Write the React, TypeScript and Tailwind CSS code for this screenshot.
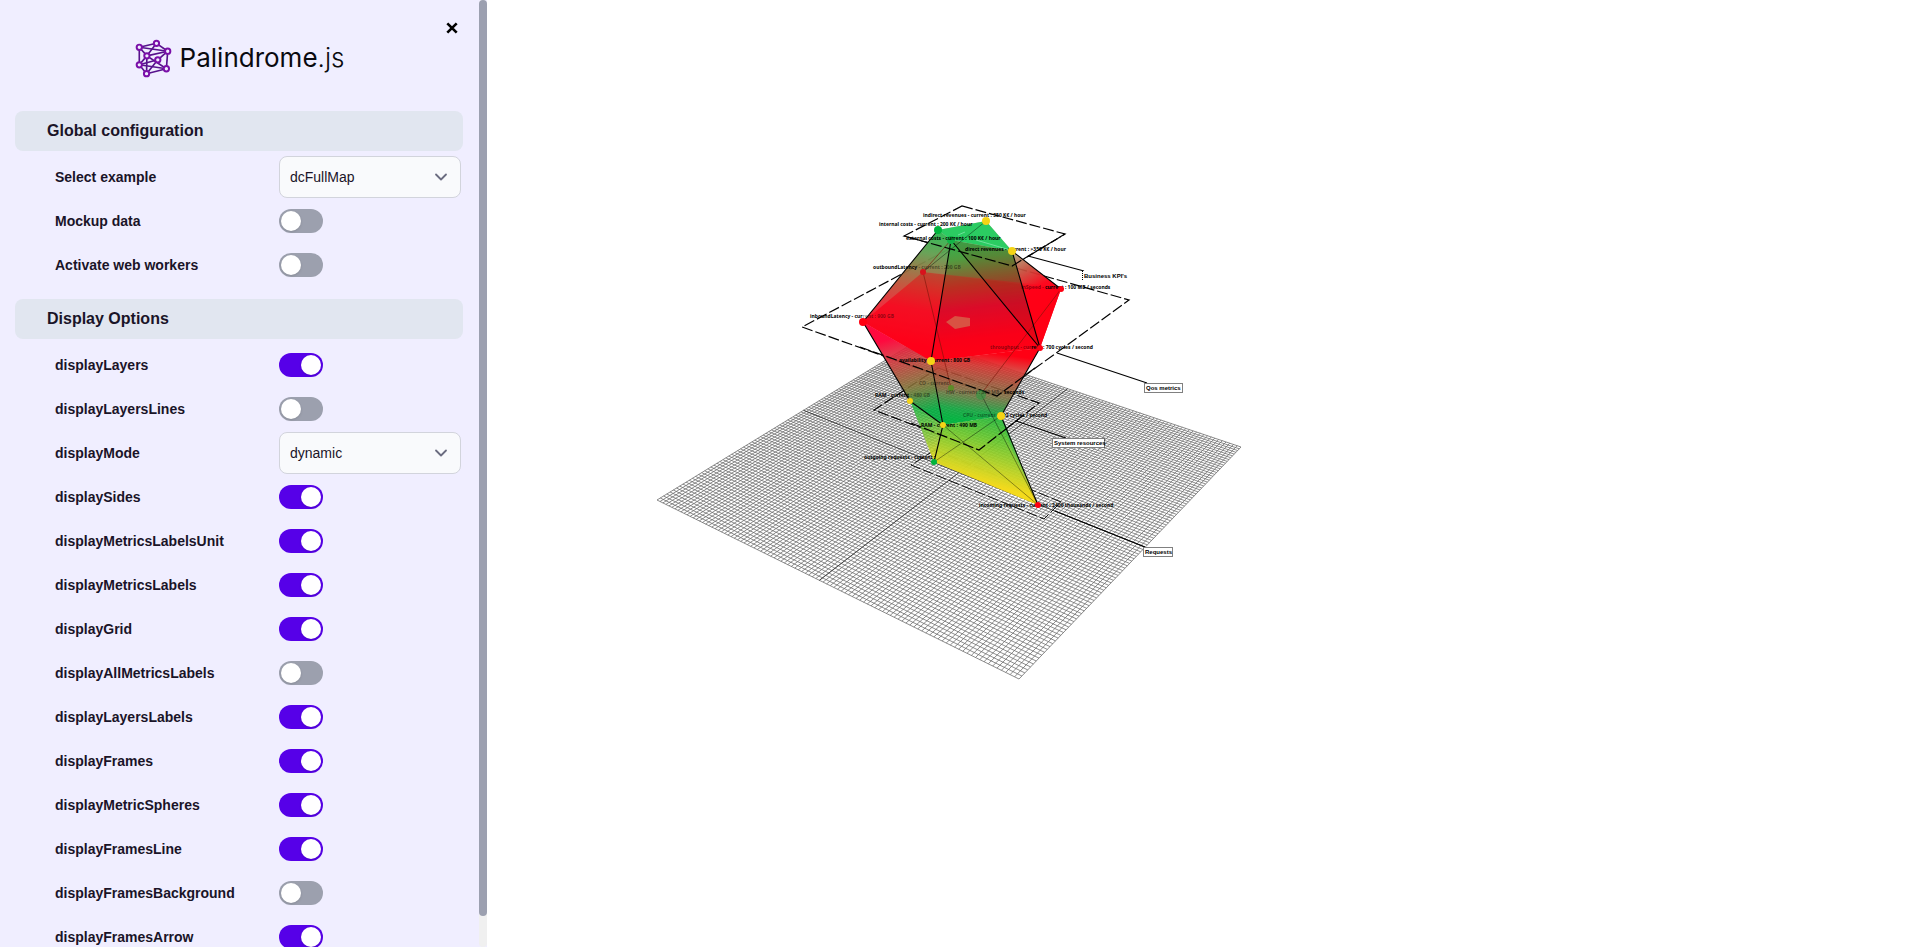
import React, { useState } from "react";
import { ChevronDown } from "lucide-react";

type Point = [number, number];

type Option =
  | { kind: "toggle"; label: string; on: boolean }
  | { kind: "select"; label: string; value: string; choices: string[] };

const toggle = (label: string, on: boolean): Option => ({ kind: "toggle", label, on });

const sections: { title: string; options: Option[] }[] = [
  {
    title: "Global configuration",
    options: [
      { kind: "select", label: "Select example", value: "dcFullMap", choices: ["dcFullMap"] },
      toggle("Mockup data", false),
      toggle("Activate web workers", false),
    ],
  },
  {
    title: "Display Options",
    options: [
      toggle("displayLayers", true),
      toggle("displayLayersLines", false),
      { kind: "select", label: "displayMode", value: "dynamic", choices: ["dynamic", "static"] },
      toggle("displaySides", true),
      toggle("displayMetricsLabelsUnit", true),
      toggle("displayMetricsLabels", true),
      toggle("displayGrid", true),
      toggle("displayAllMetricsLabels", false),
      toggle("displayLayersLabels", true),
      toggle("displayFrames", true),
      toggle("displayMetricSpheres", true),
      toggle("displayFramesLine", true),
      toggle("displayFramesBackground", false),
      toggle("displayFramesArrow", true),
    ],
  },
];

function OptionRow({ option }: { option: Option }) {
  const id = option.label.replace(/\s+/g, "-");
  const [on, setOn] = useState(option.kind === "toggle" && option.on);
  return (
    <div className="flex h-11 items-center pl-10">
      <label htmlFor={id} className="w-56 shrink-0 text-sm font-bold text-[#1a1428]">
        {option.label}
      </label>
      {option.kind === "toggle" ? (
        <input
          id={id}
          type="checkbox"
          checked={on}
          onChange={(e) => setOn(e.target.checked)}
          className="flex h-6 w-11 shrink-0 cursor-pointer appearance-none items-center rounded-full bg-[#9ca0ae] px-0.5 before:block before:size-5 before:rounded-full before:bg-white before:shadow-sm before:content-[''] checked:bg-[#5600e8] checked:before:translate-x-5"
        />
      ) : (
        <div className="grid w-[182px] items-center">
          <select
            id={id}
            defaultValue={option.value}
            className="col-start-1 row-start-1 h-[42px] w-full appearance-none rounded-lg border border-[#d2d4dc] bg-[#f9fafc] px-2.5 text-sm text-[#1a1428]"
          >
            {option.choices.map((c) => (
              <option key={c}>{c}</option>
            ))}
          </select>
          <ChevronDown
            size={20}
            strokeWidth={2.2}
            className="pointer-events-none col-start-1 row-start-1 mr-2.5 justify-self-end text-[#6b6c80]"
          />
        </div>
      )}
    </div>
  );
}

const logoNodes: Point[] = [
  [56, 66], [108, 54], [142, 78], [79, 92], [112, 104], [56, 119], [138, 131], [78, 146],
];
const logoEdges: Point[] = [
  [0, 1], [1, 2], [0, 5], [0, 3], [0, 2], [1, 3], [3, 2], [2, 6], [2, 4], [3, 5],
  [3, 7], [4, 5], [4, 7], [5, 6], [5, 7], [6, 7], [3, 6],
];

function Logo() {
  return (
    <div className="flex items-center justify-center gap-2">
      <svg viewBox="43 42 112 116" width="37" height="39" aria-hidden="true">
        <g stroke="#57128c" strokeWidth="5">
          {logoEdges.map(([a, b]) => (
            <line key={`${a}-${b}`} x1={logoNodes[a][0]} y1={logoNodes[a][1]} x2={logoNodes[b][0]} y2={logoNodes[b][1]} />
          ))}
        </g>
        {logoNodes.map(([x, y]) => (
          <circle key={`${x}-${y}`} cx={x} cy={y} r="8" fill="#f0eeff" stroke="#7a0fa8" strokeWidth="6" />
        ))}
      </svg>
      <span className="font-[Inter,sans-serif] text-[26px] leading-10 text-[#0a0a0f]">
        Palindrome<span className="font-light">.js</span>
      </span>
    </div>
  );
}

function Sidebar() {
  return (
    <aside className="flex h-full w-[487px] shrink-0 bg-[#f0eeff]">
      <div className="min-w-0 flex-1 overflow-y-auto px-[15px] [scrollbar-width:none]">
        <div className="flex h-[38px] items-end justify-end">
          <button type="button" aria-label="Close" className="flex h-5 w-6 items-center justify-center">
            <svg viewBox="0 0 12 12" width="12" height="12" stroke="#000" strokeWidth="2.6">
              <path d="M1.3 1.3 10.7 10.7M10.7 1.3 1.3 10.7" />
            </svg>
          </button>
        </div>
        <div className="h-[73px]">
          <Logo />
        </div>
        {sections.map((s) => (
          <section key={s.title} className="mb-3 pr-px">
            <h2 className="mb-1 flex h-10 items-center rounded-lg bg-[#e1e6f0] px-8 text-base font-bold text-[#1a1428]">
              {s.title}
            </h2>
            {s.options.map((o) => (
              <OptionRow key={o.label} option={o} />
            ))}
          </section>
        ))}
      </div>
      <div className="h-full w-2 rounded bg-[#f0f0f0]" aria-hidden="true">
        <div className="h-[96.7%] rounded bg-[#9ca0b0]" />
      </div>
    </aside>
  );
}

/* Ground grid, projected from a unit square onto four screen corners. */
const corners: Point[] = [[657, 500], [1019, 679], [1241, 447], [920, 339]];
const DIVISIONS = 100;

function project(u: number, v: number): Point {
  const [[x0, y0], [x1, y1], [x2, y2], [x3, y3]] = corners;
  const dx1 = x1 - x2, dx2 = x3 - x2, sx = x0 - x1 + x2 - x3;
  const dy1 = y1 - y2, dy2 = y3 - y2, sy = y0 - y1 + y2 - y3;
  const det = dx1 * dy2 - dx2 * dy1;
  const g = (sx * dy2 - dx2 * sy) / det;
  const h = (dx1 * sy - sx * dy1) / det;
  const w = g * u + h * v + 1;
  return [
    ((x1 - x0 + g * x1) * u + (x3 - x0 + h * x3) * v + x0) / w,
    ((y1 - y0 + g * y1) * u + (y3 - y0 + h * y3) * v + y0) / w,
  ];
}

const segment = (a: Point, b: Point) =>
  `M${a[0].toFixed(1)} ${a[1].toFixed(1)}L${b[0].toFixed(1)} ${b[1].toFixed(1)}`;

const gridPath = Array.from({ length: DIVISIONS + 1 }, (_, i) => i / DIVISIONS)
  .map((t) => segment(project(t, 0), project(t, 1)) + segment(project(0, t), project(1, t)))
  .join("");
const axisPath = segment(project(0.5, 0), project(0.5, 1)) + segment(project(0, 0.5), project(1, 0.5));

const frames = [
  "962,206 1065,234 1012,266 904,236",
  "949,249 1129,300 997,396 802,327",
  "938,368 1039,403 979,450 874,410",
];

const spheres: [number, number, string, number][] = [
  [986, 221, "#f5d416", 4], [1012, 251, "#f5d416", 4], [938, 230, "#00b33c", 4],
  [863, 322, "#ff0012", 4], [931, 361, "#f5d416", 4], [1040, 348, "#ff0012", 3],
  [1061, 289, "#ff0012", 3], [910, 401, "#f5d416", 3], [943, 425, "#f5d416", 3],
  [1001, 416, "#f5d416", 4], [934, 462, "#00b33c", 3], [1038, 505, "#ff0012", 3],
];

type LabelPart = { text: string; opacity: number };
const solid = (text: string): LabelPart => ({ text, opacity: 1 });
const faded = (text: string): LabelPart => ({ text, opacity: 0.45 });

const metricLabels: { x: number; y: number; parts: LabelPart[] }[] = [
  { x: 923, y: 217, parts: [solid("indirect revenues - current : 350 K€ / hour")] },
  { x: 879, y: 226, parts: [solid("internal costs - current : 200 K€ / hour")] },
  { x: 906, y: 240, parts: [solid("external costs - current : 100 K€ / hour")] },
  { x: 965, y: 251, parts: [solid("direct revenues - current : >350 K€ / hour")] },
  { x: 873, y: 269, parts: [solid("outboundLatency"), faded(" - current : 200 GB")] },
  { x: 1021, y: 289, parts: [faded("inSpeed - "), solid("current : 100 MB / seconds")] },
  { x: 810, y: 318, parts: [solid("inboundLatency - cur"), faded("rent : 900 GB")] },
  { x: 990, y: 349, parts: [faded("throughput - cur"), solid("rent : 700 cycles / second")] },
  { x: 899, y: 362, parts: [solid("availability - current : 800 GB")] },
  { x: 919, y: 385, parts: [faded("CO - current")] },
  { x: 946, y: 394, parts: [faded("HW - current : 390 MB / "), solid("seconds")] },
  { x: 875, y: 397, parts: [solid("RAM - current"), faded(" : 480 GB")] },
  { x: 963, y: 417, parts: [faded("CPU - current"), solid(" : 392 cycles / second")] },
  { x: 921, y: 427, parts: [solid("RAM - current : 490 MB")] },
  { x: 864, y: 459, parts: [solid("outgoing requests - current :")] },
  { x: 979, y: 507, parts: [solid("incoming requests - current : 2400 thousands / second")] },
];

const layerLabels: { x: number; y: number; w: number; text: string; from: Point; to: Point; open?: boolean }[] = [
  { x: 1082, y: 271, w: 46, text: "Business KPI's", from: [1028, 256], to: [1084, 271], open: true },
  { x: 1144, y: 383, w: 38, text: "Qos metrics", from: [1057, 353], to: [1147, 383] },
  { x: 1052, y: 438, w: 52, text: "System resources", from: [1016, 421], to: [1066, 438] },
  { x: 1143, y: 547, w: 29, text: "Requests", from: [1055, 511], to: [1145, 547] },
];

function Gradient({ id, from, to, stops }: { id: string; from: Point; to: Point; stops: [number, string, number][] }) {
  return (
    <linearGradient id={id} gradientUnits="userSpaceOnUse" x1={from[0]} y1={from[1]} x2={to[0]} y2={to[1]}>
      {stops.map(([o, c, a]) => (
        <stop key={o} offset={o} stopColor={c} stopOpacity={a} />
      ))}
    </linearGradient>
  );
}

function Scene() {
  return (
    <svg viewBox="487 0 1432 947" className="h-full w-full" role="img" aria-label="3D metrics map">
      <defs>
        <Gradient id="upperLeft" from={[938, 232]} to={[918, 345]} stops={[[0, "#22bd50", 0.9], [0.2, "#5fa050", 0.9], [0.5, "#c04a30", 0.85], [0.7, "#f01428", 0.8], [1, "#ff0018", 0.95]]} />
        <Gradient id="upperMid" from={[980, 232]} to={[994, 355]} stops={[[0, "#1fbb50", 0.95], [0.2, "#4a9a3a", 0.95], [0.42, "#9a4625", 0.95], [0.6, "#cc1030", 0.97], [0.85, "#f80018", 1], [1, "#ff0014", 1]]} />
        <Gradient id="upperRight" from={[1012, 250]} to={[1043, 310]} stops={[[0, "#a8b888", 0.75], [0.35, "#c84838", 0.85], [0.65, "#ff0018", 0.95], [1, "#ff0014", 1]]} />
        <Gradient id="lowerLeft" from={[905, 335]} to={[925, 412]} stops={[[0, "#ff0038", 0.95], [0.3, "#d03a3c", 0.8], [0.65, "#7c7a38", 0.8], [1, "#00ad3e", 0.9]]} />
        <Gradient id="lowerMid" from={[985, 352]} to={[975, 422]} stops={[[0, "#ff0014", 1], [0.2, "#d83530", 0.9], [0.6, "#7c7040", 0.85], [0.85, "#12a840", 0.9], [1, "#00b43e", 0.95]]} />
        <Gradient id="baseLeft" from={[920, 408]} to={[930, 462]} stops={[[0, "#1cba3c", 0.8], [0.6, "#92cc28", 0.8], [1, "#f4dc1c", 0.95]]} />
        <Gradient id="baseMid" from={[985, 405]} to={[965, 478]} stops={[[0, "#08b440", 0.9], [0.4, "#62c82c", 0.9], [0.75, "#bcd424", 0.95], [1, "#f4da1c", 1]]} />
        <Gradient id="baseRight" from={[1001, 416]} to={[1038, 505]} stops={[[0, "#12b448", 0.6], [0.6, "#62c060", 0.45], [1, "#d8d428", 0.9]]} />
      </defs>

      <g fill="none">
        <path d={gridPath} stroke="#6e6e6e" strokeWidth="0.8" />
        <path d={axisPath} stroke="#333" strokeWidth="0.8" />
      </g>

      <g fill="none" stroke="#000" strokeDasharray="11 3">
        {frames.map((points) => (
          <polygon key={points} points={points} strokeWidth="1.2" />
        ))}
        <polygon points="935,450 1061,502 1044,519 911,465" strokeWidth="0.9" />
      </g>

      {/* Far side of the solid */}
      <polygon points="863,322 923,272 1061,289 1040,348 931,361" fill="#ff0018" />
      <polygon points="938,230 986,221 1012,251 1061,289 923,272 863,322" fill="#b08a62" opacity="0.6" />
      <polygon points="863,322 923,272 951,388 910,401" fill="#e03a40" opacity="0.35" />

      {/* Near side */}
      <polygon points="938,230 951,240 931,361 863,322" fill="url(#upperLeft)" />
      <polygon points="951,240 1012,251 1040,348 931,361" fill="url(#upperMid)" />
      <polygon points="1012,251 1061,289 1040,348" fill="url(#upperRight)" />
      <polygon points="863,322 931,361 943,425 910,401" fill="url(#lowerLeft)" />
      <polygon points="931,361 1040,348 1001,416 943,425" fill="url(#lowerMid)" />
      <polygon points="910,401 943,425 934,462" fill="url(#baseLeft)" />
      <polygon points="943,425 1001,416 1038,505 934,462" fill="url(#baseMid)" />
      <polygon points="1001,416 1007,428 1038,505 1012,450" fill="url(#baseRight)" />
      <polygon points="938,230 986,221 1012,251 951,240" fill="#2bcc62" />
      <polygon points="863,322 923,272 1050,286 1040,348 931,361" fill="#ff0018" opacity="0.28" />
      <polygon points="951,240 1012,251 1040,348" fill="#702010" opacity="0.15" />
      <polygon points="946,322 955,316 970,318 970,326 955,329" fill="#d95243" />
      <path d="M958 235 965 232M976 240 1010 250" stroke="#6fe09a" strokeWidth="1" />

      {/* Edges */}
      <path d="M923 272 951 388M1061 289 981 394M923 272 951 240" fill="none" stroke="#7a1408" opacity="0.6" />
      <path d="M986 221 923 272M981 394 1038 505M1001 416 934 462M943 425 1038 505" stroke="#000" fill="none" opacity="0.4" />
      <path
        d="M938 230 863 322 910 401 943 425 934 462M951 240 931 361 943 425M951 240 1040 348M1012 251 1040 348M1012 251 1061 289M1040 348 1001 416 1038 505"
        fill="none"
        stroke="#000"
        strokeWidth="1.1"
      />
      <g fill="none" stroke="#000" strokeWidth="1.2" strokeDasharray="11 3">
        <path d="M904 236 1012 266 1065 234M860 347 997 396 1035 368M911 423 979 450 1020 418" />
      </g>

      <circle cx="951" cy="240" r="4" fill="#12b447" />
      <circle cx="923" cy="272" r="3" fill="#d8121c" />
      <circle cx="951" cy="388" r="3" fill="#5c8c28" />
      <circle cx="981" cy="395" r="5" fill="#2a9a40" opacity="0.6" />

      <g className="font-['Noto_Sans',sans-serif] text-[5px] font-bold" fill="#000">
        {metricLabels.map(({ x, y, parts }) => (
          <text key={`${x}-${y}`} x={x} y={y}>
            {parts.map((p) => (
              <tspan key={p.text} fillOpacity={p.opacity}>
                {p.text}
              </tspan>
            ))}
          </text>
        ))}
      </g>

      {spheres.map(([x, y, color, r]) => (
        <circle key={`${x}-${y}`} cx={x} cy={y} r={r} fill={color} />
      ))}

      <g className="text-[6px] font-bold">
        {layerLabels.map((l) => (
          <g key={l.text}>
            <path d={segment(l.from, l.to)} stroke="#000" strokeWidth="1.1" />
            <rect x={l.x} y={l.y} width={l.w} height="10" fill="#fff" />
            <path
              d={l.open ? `M${l.x + 0.5} ${l.y}v10` : `M${l.x + 0.5} ${l.y + 0.5}h${l.w}v9h${-l.w}z`}
              fill="none"
              stroke="#000"
              strokeDasharray="1 1"
            />
            <text x={l.x + 2} y={l.y + 7} fill="#000">
              {l.text}
            </text>
          </g>
        ))}
      </g>
    </svg>
  );
}

export default function App() {
  return (
    <div className="flex h-screen overflow-hidden bg-white font-['Liberation_Sans',Arial,sans-serif]">
      <Sidebar />
      <main className="min-w-0 flex-1">
        <Scene />
      </main>
    </div>
  );
}
